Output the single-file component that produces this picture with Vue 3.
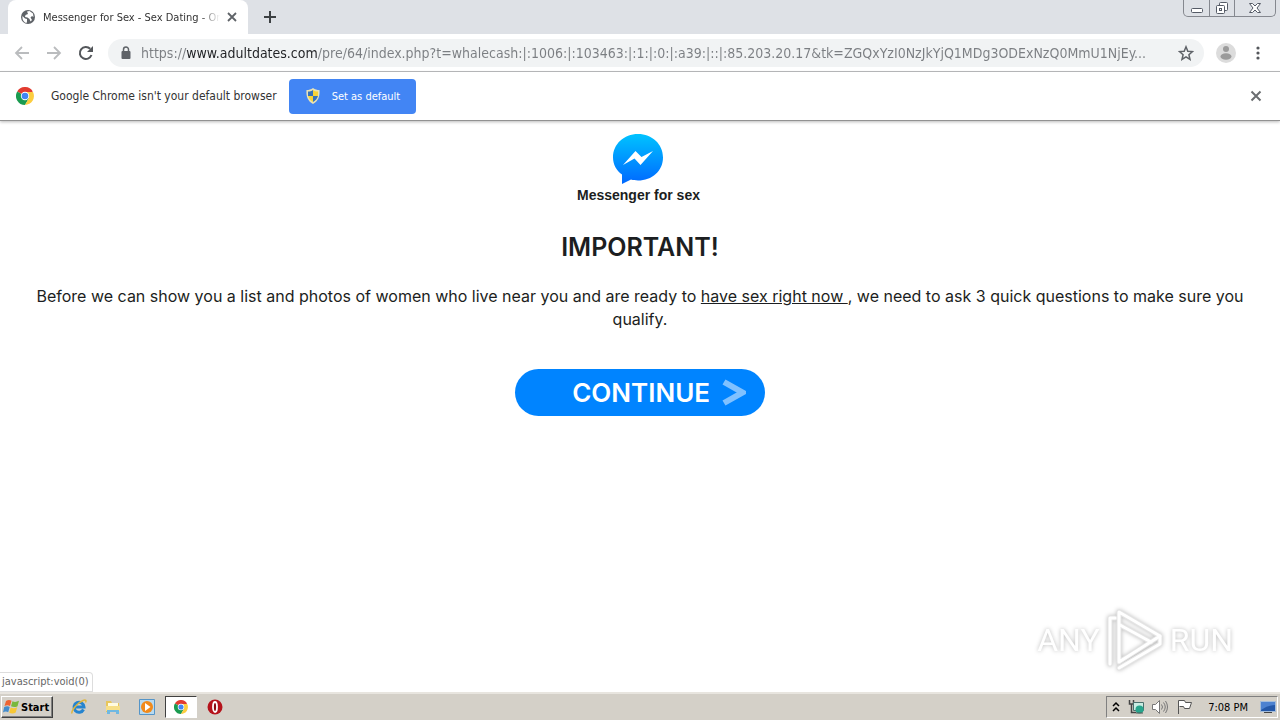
<script setup>
import { ref } from 'vue'

const url = ref(
  'https://www.adultdates.com/pre/64/index.php?t=whalecash:|:1006:|:103463:|:1:|:0:|:a39:|::|:85.203.20.17&tk=ZGQxYzI0NzJkYjQ1MDg3ODExNzQ0MmU1NjEy...'
)
const showInfobar = ref(true)
</script>

<template>
  <div class="screen">
    <header class="tab-strip">
      <div class="tab">
        <svg class="icon16" viewBox="0 0 16 16">
          <circle cx="8" cy="8" r="7" fill="#5f6368" />
          <path d="M2.500 7 5 9.500 7 10v2.500L6.500 14C4 13.500 2 11 2.500 7zM7 2.500 9.500 2 13 4.500 13.500 8 12 7 10.500 8.500 12 11l-1.500 1.500L9.500 10 7.500 8.500 5 8l.5-2L8 5z" fill="#fff" />
        </svg>
        <span class="tab-title">Messenger for Sex - Sex Dating - Onl</span>
        <button class="plain" aria-label="Close tab">
          <svg class="icon16" viewBox="0 0 16 16"><path d="m4 4 8 8M12 4l-8 8" stroke="#5f6368" stroke-width="1.800" /></svg>
        </button>
      </div>
      <button class="plain new-tab" aria-label="New tab">
        <svg class="icon16" viewBox="0 0 16 16"><path d="M8 2v12M2 8h12" stroke="#3c4043" stroke-width="2" /></svg>
      </button>
      <div class="window-buttons">
        <button class="plain" aria-label="Minimize">
          <svg width="14" height="12" viewBox="0 0 14 12"><rect x="1.500" y="6.500" width="11" height="4" rx="1" fill="#fff" stroke="#555b66" /></svg>
        </button>
        <button class="plain" aria-label="Restore">
          <svg width="14" height="14" viewBox="0 0 14 14" fill="#fff" stroke="#555b66"><rect x="4.500" y="1.500" width="8" height="8" rx="1" /><rect x="1.500" y="4.500" width="8" height="8" rx="1" /><rect x="4.500" y="7.500" width="2" height="2" /></svg>
        </button>
        <button class="plain wide" aria-label="Close">
          <svg width="14" height="12" viewBox="0 0 14 12"><path d="M1.500 1.500h3L7 4l2.500-2.500h3L9 6l3.500 4.500h-3L7 8l-2.500 2.500h-3L5 6z" fill="#fff" stroke="#555b66" /></svg>
        </button>
      </div>
    </header>

    <nav class="toolbar">
      <button class="plain" aria-label="Back">
        <svg class="icon16" viewBox="0 0 16 16"><path d="M15 8H2.500M8 2 2 8l6 6" fill="none" stroke="#babcbe" stroke-width="1.800" /></svg>
      </button>
      <button class="plain" aria-label="Forward">
        <svg class="icon16" viewBox="0 0 16 16"><path d="M1 8h12.500M8 2l6 6-6 6" fill="none" stroke="#babcbe" stroke-width="1.800" /></svg>
      </button>
      <button class="plain" aria-label="Reload">
        <svg class="icon16" viewBox="0 0 16 16"><path d="M13.500 10A6 6 0 1 1 12.200 3.800" fill="none" stroke="#54575b" stroke-width="2" /><path d="M15 1v6H9z" fill="#54575b" /></svg>
      </button>
      <div class="omnibox">
        <svg class="icon16" viewBox="0 0 16 16"><path d="M5.500 7V4.500a2.500 2.500 0 0 1 5 0V7" fill="none" stroke="#5f6368" stroke-width="1.500" /><rect x="3.500" y="6" width="9" height="8" rx="1" fill="#5f6368" /></svg>
        <input v-model="url" class="address" type="text" aria-label="Address" spellcheck="false" />
        <button class="plain" aria-label="Bookmark this page">
          <svg class="icon16" viewBox="0 0 16 16"><path d="m8 1.800 1.800 4.400 4.700.4-3.600 3.100 1.100 4.600L8 11.800l-4 2.500 1.100-4.600L1.500 6.600l4.700-.4z" fill="none" stroke="#5f6368" stroke-width="1.500" /></svg>
        </button>
      </div>
      <button class="plain" aria-label="Profile">
        <svg width="20" height="20" viewBox="0 0 20 20"><circle cx="10" cy="10" r="10" fill="#dcdcdc" /><circle cx="10" cy="6" r="3" fill="#9b9b9b" /><ellipse cx="10" cy="13.500" rx="5.500" ry="3.200" fill="#9b9b9b" /></svg>
      </button>
      <button class="plain" aria-label="Menu">
        <svg class="icon16" viewBox="0 0 16 16" fill="#54575b"><circle cx="8" cy="3" r="1.600" /><circle cx="8" cy="8" r="1.600" /><circle cx="8" cy="13" r="1.600" /></svg>
      </button>
    </nav>

    <div v-if="showInfobar" class="infobar">
      <svg class="chrome" viewBox="0 0 18 18">
        <path d="M9 9 1.200 4.500a9 9 0 0 1 15.600 0z" fill="#e23b30" />
        <path d="M9 9 1.200 4.500A9 9 0 0 0 9 18l3.900-6.700z" fill="#1a9b50" />
        <path d="M9 5h8a9 9 0 0 1-8 13l3.900-6.700z" fill="#fccd3f" />
        <circle cx="9" cy="9" r="4.200" fill="#fff" /><circle cx="9" cy="9" r="3.300" fill="#4285f4" />
      </svg>
      <span>Google Chrome isn't your default browser</span>
      <button class="set-default">
        <svg class="icon16" viewBox="0 0 16 16">
          <path d="M8 0c2 1.500 4 2 6.500 2 .5 6-1 11-6.500 14C2.500 13 1 8 1.500 2 4 2 6 1.500 8 0z" fill="#e9e2b5" />
          <path d="M8 2v6H3V3.500C5 3.500 6.500 3 8 2z" fill="#3672b9" /><path d="M8 2c1.500 1 3 1.500 5 1.500V8H8z" fill="#f8d437" />
          <path d="M3 8h5v6C5.500 12.500 4 10.500 3 8z" fill="#f8d437" /><path d="M8 8h5c-.8 2.500-2.300 4.500-5 6z" fill="#3672b9" />
        </svg>
        Set as default
      </button>
      <button class="plain close-infobar" aria-label="Dismiss" @click="showInfobar = false">
        <svg class="icon16" viewBox="0 0 16 16"><path d="m3.500 3.500 9 9M12.500 3.500l-9 9" stroke="#6b6e71" stroke-width="2" /></svg>
      </button>
    </div>

    <main class="page">
      <div class="logo">
        <svg width="52" height="52" viewBox="0 0 52 52">
          <defs>
            <linearGradient id="bubble" x1="0" y1="0" x2="0" y2="1"><stop offset="0" stop-color="#00c3ff" /><stop offset="1" stop-color="#0068ff" /></linearGradient>
          </defs>
          <path d="M26 1c14 0 25 10 25 23.500S40 47.500 26 47.500c-2.500 0-5-.3-7-.9L10 51v-9.500C4.500 37.500 1 31.500 1 24.500 1 11 12 1 26 1z" fill="url(#bubble)" />
          <path d="m11 32 12.500-14 6 6L41 18 28.500 32l-6-6.500z" fill="#fff" />
        </svg>
        <span class="logo-name">Messenger for sex</span>
      </div>
      <h1>IMPORTANT!</h1>
      <p>
        Before we can show you a list and photos of women who live near you and are ready to
        <u>have sex right now&nbsp;</u>, we need to ask 3 quick questions to make sure you qualify.
      </p>
      <button class="continue">
        <span>CONTINUE</span>
        <svg width="24" height="30" viewBox="0 0 24 30"><path d="M2 4 20.500 14.500 2 25" fill="none" stroke="#80c1ff" stroke-width="6" /></svg>
      </button>

      <div class="status">javascript:void(0)</div>
      <div class="watermark">
        <span>ANY</span>
        <svg width="58" height="64" viewBox="0 0 58 64" fill="none" stroke-linejoin="round" stroke-linecap="round">
          <g stroke="#e5e5e5" stroke-width="5"><path d="M13 54V4l41 24-41 26" /><path d="M4 56V10h5M13 60l41-24V28M14 17l31 17" /></g>
          <g stroke="#fff" stroke-width="3"><path d="M13 54V4l41 24-41 26" /><path d="M4 56V10h5M13 60l41-24V28M14 17l31 17" /></g>
        </svg>
        <span>RUN</span>
      </div>
    </main>

    <footer class="taskbar">
      <button class="start">
        <svg width="17" height="16" viewBox="0 0 17 16">
          <path d="M3 2c2-1.500 4-1.300 5.500-.3L7 7C5.500 6 3.500 6 1.500 7z" fill="#ee6432" /><path d="M9.500 2.300c2 1 4 .8 6.500-.5l-1.500 5.400c-2 1.200-4.500 1-6.500.1z" fill="#79b83c" />
          <path d="M1.200 8c2-1 4-1 5.500 0l-1.500 5.300c-1.500-1-3.500-1-5.200.2z" fill="#438ccc" /><path d="M7.700 8.500c2 1 4 1 6.500-.3l-1.500 5.300c-2 1.300-4.500 1.200-6.500.2z" fill="#f7c735" />
        </svg>
        Start
      </button>
      <div class="tasks">
        <button class="task" aria-label="Internet Explorer">
          <svg class="icon16" viewBox="0 0 16 16"><path d="M12.500 10.500A5 5 0 1 1 13 8H4" fill="none" stroke="#2584cf" stroke-width="3" /><path d="M1 14.500C0 12 6 4 12 1.500c3-1 3.500 0 2.500 2" fill="none" stroke="#dfb53c" stroke-width="1.500" /></svg>
        </button>
        <button class="task" aria-label="Explorer">
          <svg class="icon16" viewBox="0 0 16 16"><path d="M1 2h5l1 2h7v9H1z" fill="#e8c65b" /><path d="M3 4h10v5H3z" fill="#fffbe0" /><path d="M1 7h14v5H1z" fill="#f7df87" /><path d="M2 15v-4h12v4h-3v-2H5v2z" fill="#6fb8e2" /></svg>
        </button>
        <button class="task" aria-label="Media Player">
          <svg class="icon16" viewBox="0 0 16 16"><path d="M.5.5h15v15H.5z" fill="#b8daf0" stroke="#5595c8" /><circle cx="8" cy="8" r="6" fill="#f18a1b" /><path d="m6 4 5.500 4L6 12z" fill="#fff" /></svg>
        </button>
        <button class="task active" aria-label="Google Chrome">
          <svg class="small-chrome" viewBox="0 0 18 18">
            <path d="M9 9 1.200 4.500a9 9 0 0 1 15.600 0z" fill="#e23b30" />
            <path d="M9 9 1.200 4.500A9 9 0 0 0 9 18l3.900-6.700z" fill="#1a9b50" />
            <path d="M9 5h8a9 9 0 0 1-8 13l3.900-6.700z" fill="#fccd3f" />
            <circle cx="9" cy="9" r="4.200" fill="#fff" /><circle cx="9" cy="9" r="3.300" fill="#4285f4" />
          </svg>
        </button>
        <button class="task" aria-label="Opera">
          <svg class="icon16" viewBox="0 0 16 16"><circle cx="8" cy="8" r="7.500" fill="#b5121b" /><ellipse cx="8" cy="8" rx="2" ry="5" fill="#8a0a10" stroke="#fff" stroke-width="1.800" /></svg>
        </button>
      </div>
      <div class="tray">
        <svg width="8" height="12" viewBox="0 0 8 12"><path d="m1 5 3-3 3 3M1 10l3-3 3 3" fill="none" stroke="#000" stroke-width="1.500" /></svg>
        <svg class="icon16" viewBox="0 0 16 16"><path d="M1.500 1v4h4V1M3.500 5v8.500H8" fill="none" stroke="#444" stroke-width="1.500" /><path d="M5.500 3.500h10v8h-10z" fill="#c9ede3" stroke="#4b706d" /><circle cx="11.500" cy="10.500" r="4" fill="#27a58c" /><path d="M8 14h7" stroke="#555" /></svg>
        <svg class="icon16" viewBox="0 0 16 16" fill="none" stroke="#777"><path d="M.5 5.500h3l4-4v13l-4-4h-3z" fill="#fff" /><path d="M9.500 5.500q2 2.500 0 5M11.500 3.500q3.500 4.500 0 9M13.500 2q4 6 0 12" /></svg>
        <svg class="icon16" viewBox="0 0 16 16"><path d="M2.500 15V1.500h6l1 2h6l-2 6h-5l-1-2h-4" fill="#fff" stroke="#555" /></svg>
        <time>7:08 PM</time>
        <svg class="icon16" viewBox="0 0 16 16"><path d="M.5 2.500h15v10H.5z" fill="#2458a8" stroke="#a4bddb" /><path d="M1 3h14v3Q8 6 1 11z" fill="#4d82d0" /><path d="M4 13.500h8" stroke="#444" /></svg>
      </div>
    </footer>
  </div>
</template>

<style>
body {
  margin: 0;
}
</style>

<style scoped>
.screen {
  display: flex;
  flex-direction: column;
  min-height: 100vh;
  background: #fff;
  font-family: 'DejaVu Sans Condensed', 'DejaVu Sans', sans-serif;
  font-size: 12px;
  color: #333;
}

button {
  font: inherit;
}

svg {
  display: block;
  flex: none;
}

.icon16 {
  width: 16px;
  height: 16px;
}

.plain {
  display: flex;
  align-items: center;
  justify-content: center;
  padding: 0;
  border: 0;
  background: none;
}

.tab-strip {
  display: flex;
  align-items: flex-start;
  height: 34px;
  padding: 0 4px 0 8px;
  background: #dee1e6;
}

.tab {
  display: flex;
  align-items: center;
  box-sizing: border-box;
  width: 240px;
  height: 34px;
  padding: 0 8px 0 12px;
  border-radius: 8px 8px 0 0;
  background: #fff;
}

.tab-title {
  flex: 1;
  margin: 0 4px 0 7px;
  overflow: hidden;
  white-space: nowrap;
  font-size: 11px;
  mask-image: linear-gradient(to left, transparent, #000 20px);
}

.new-tab {
  width: 28px;
  height: 34px;
  margin-left: 8px;
}

.window-buttons {
  display: flex;
  margin-left: auto;
  border: 1px solid #85888f;
  border-top: 0;
  border-radius: 0 0 5px 5px;
}

.window-buttons button {
  width: 25px;
  height: 16px;
}

.window-buttons button + button {
  border-left: 1px solid #85888f;
}

.window-buttons .wide {
  width: 41px;
}

.toolbar {
  display: flex;
  align-items: center;
  gap: 16px;
  height: 37px;
  padding: 0 14px;
  border-bottom: 1px solid #b3b4b6;
}

.omnibox {
  display: flex;
  flex: 1;
  align-items: center;
  height: 28px;
  margin: 0 -4px 0 -2px;
  padding: 0 10px;
  border-radius: 14px;
  background: #f1f3f4;
}

.toolbar > button:last-child {
  margin-left: -2px;
}

/* the host name is darker than the rest of the address */
.address {
  flex: 1;
  min-width: 0;
  margin: 0 16px 0 7px;
  padding: 0;
  border: 0;
  outline: 0;
  font: 14px 'DejaVu Sans Condensed', 'DejaVu Sans', sans-serif;
  color: transparent;
  background: linear-gradient(to right, #7b7e82 45px, #202124 45px, #202124 177px, #7b7e82 177px);
  background-clip: text;
}

.infobar {
  display: flex;
  align-items: center;
  height: 48px;
  padding: 0 16px;
  border-bottom: 1px solid #929292;
  box-shadow: 0 1px 3px #bbb;
}

.chrome {
  width: 18px;
  height: 18px;
  margin-right: 17px;
}

.set-default {
  display: flex;
  align-items: center;
  gap: 11px;
  height: 35px;
  margin-left: 12px;
  padding: 0 16px;
  border: 0;
  border-radius: 4px;
  background: #4285f4;
  color: #fff;
  font-size: 11px;
}

.close-infobar {
  margin-left: auto;
}

.page {
  position: relative;
  display: flex;
  flex: 1;
  flex-direction: column;
  align-items: center;
  padding: 12px 32px 0;
  color: #1c1e21;
  font-family: Inter, sans-serif;
}

.logo {
  display: flex;
  flex-direction: column;
  align-items: center;
  padding-right: 3px;
}

.logo-name {
  font: bold 14px/20px 'Liberation Sans', sans-serif;
}

h1 {
  margin: 26px 0 0;
  font-size: 25px;
  line-height: 32px;
  font-weight: 600;
}

p {
  margin: 22px 0 0;
  font-size: 16px;
  line-height: 23px;
  text-align: center;
}

.continue {
  display: flex;
  align-items: center;
  justify-content: flex-end;
  gap: 12px;
  width: 250px;
  height: 47px;
  margin-top: 38px;
  padding: 0 19px;
  border: 0;
  border-radius: 24px;
  background: #0084ff;
  color: #fff;
  font-size: 26px;
  font-weight: 600;
}

.status {
  position: absolute;
  left: 0;
  bottom: 0;
  padding: 0 3px 0 2px;
  border: 1px solid #ddd;
  border-left: 0;
  border-radius: 0 4px 0 0;
  color: #666;
  font: 11px/18px 'DejaVu Sans Condensed', 'DejaVu Sans', sans-serif;
}

.watermark {
  position: absolute;
  right: 47px;
  bottom: 20px;
  display: flex;
  align-items: center;
  gap: 6px;
  color: #fff;
  font: 32px Roboto, sans-serif;
  filter: drop-shadow(0 0 2px #bbb);
}

.taskbar {
  display: flex;
  align-items: center;
  box-sizing: border-box;
  height: 28px;
  padding: 0 2px 0 1px;
  border-top: 2px solid #e8e5df;
  background: #d4d0c8;
  color: #000;
}

.start {
  display: flex;
  align-items: center;
  gap: 1px;
  height: 22px;
  padding: 0 3px 0 1px;
  border: 1px solid;
  border-color: #fff #404040 #404040 #fff;
  background: #d4d0c8;
  box-shadow: inset -1px -1px #808080;
  font-size: 11px;
  font-weight: bold;
}

.tasks {
  display: flex;
  gap: 2px;
  margin-left: 10px;
}

.task {
  display: flex;
  align-items: center;
  justify-content: center;
  width: 32px;
  height: 22px;
  padding: 0;
  border: 1px solid transparent;
  background: none;
}

.task.active {
  border-color: #404040 #fff #fff #404040;
  background: #fff;
}

.small-chrome {
  width: 14px;
  height: 14px;
}

.tray {
  display: flex;
  align-items: center;
  gap: 8px;
  height: 20px;
  margin-left: auto;
  padding: 0 1px 0 5px;
  border: 1px solid;
  border-color: #808080 #fff #fff #808080;
  font-size: 11px;
}

time {
  margin: 0 4px 0 8px;
}
</style>
